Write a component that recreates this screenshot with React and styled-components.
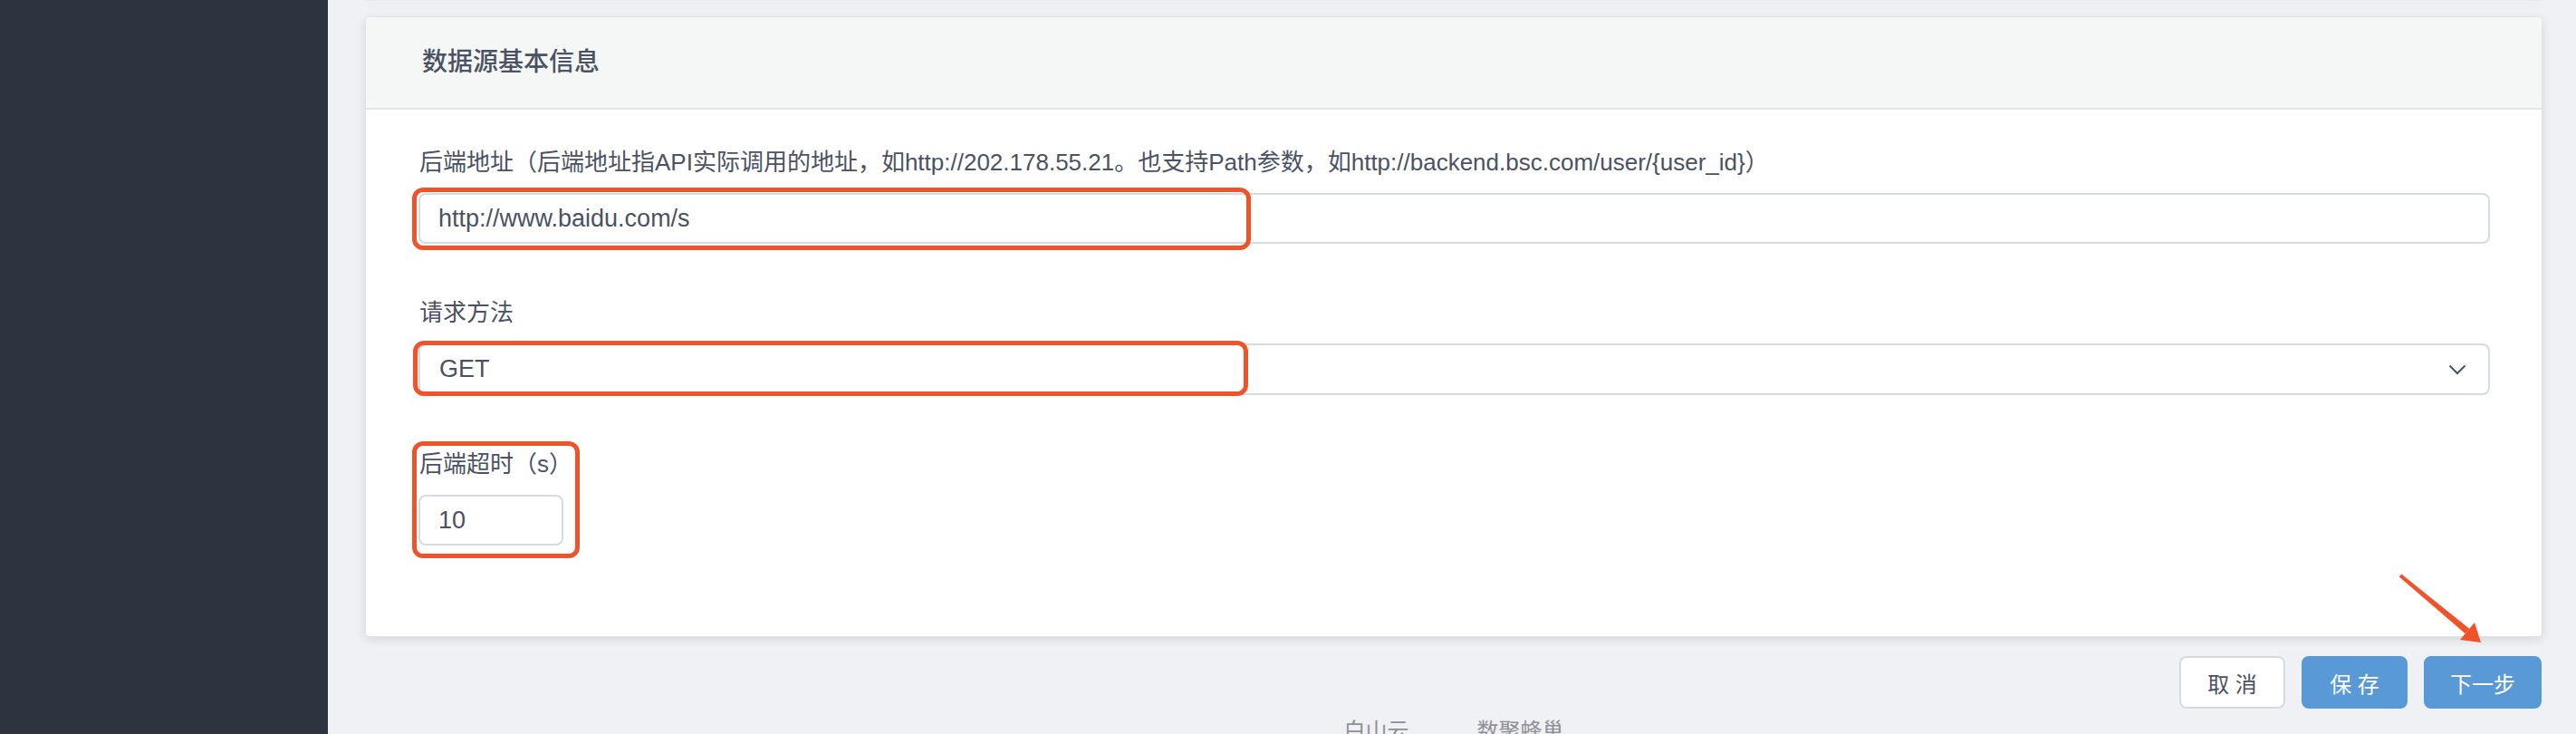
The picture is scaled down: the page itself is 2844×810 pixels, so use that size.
import React from "react";
import styled, { createGlobalStyle } from "styled-components";

const GlobalStyle = createGlobalStyle`
  html, body { margin: 0; padding: 0; }
  body {
    background: #eff1f4;
    font-family: "Liberation Sans", "Noto Sans CJK SC", sans-serif;
    color: #4a5263;
  }
  * { box-sizing: border-box; }
`;

const Layout = styled.div`
  display: flex;
  height: 810px;
  overflow: hidden;
`;

const Sidebar = styled.aside`
  width: 362px;
  flex: none;
  background: #2d3440;
`;

const Main = styled.main`
  flex: 1;
  display: flex;
  flex-direction: column;
  padding: 0 38px 0 42px;
  min-width: 0;
  & > * { flex-shrink: 0; }
`;

const PrevCardTail = styled.div`
  height: 1px;
  background: #e8eaee;
  box-shadow: 0 2px 10px rgba(40, 50, 70, 0.14);
  margin-bottom: 18px;
`;

const Card = styled.section`
  background: #fff;
  border-radius: 4px;
  box-shadow: 0 0 0 1px #e0e3e8, 0 3px 12px rgba(40, 50, 70, 0.16);
  overflow: hidden;
`;

const CardHeader = styled.header`
  height: 102px;
  display: flex;
  align-items: center;
  padding-left: 62px;
  background: #f5f7f7;
  border-bottom: 2px solid #e3e6ea;
`;

const CardTitle = styled.h2`
  margin: 0;
  font-size: 28px;
  font-weight: 500;
  color: #4a5263;
  line-height: 36px;
`;

const CardBody = styled.div`
  display: flex;
  flex-direction: column;
  gap: 58px;
  padding: 40px 57px 100px 58px;
`;

const FormGroup = styled.div`
  position: relative;
  display: flex;
  flex-direction: column;
  align-items: ${(p) => (p.$compact ? "flex-start" : "stretch")};
`;

const Label = styled.label`
  font-size: 26px;
  line-height: 36px;
  color: #4a5263;
  margin-bottom: 16px;
  padding-left: 1px;
`;

const FieldWrap = styled.div`
  position: relative;
  width: ${(p) => p.$width || "100%"};
`;

const TextInput = styled.input`
  display: block;
  width: 100%;
  height: 56px;
  padding: 0 20px;
  border: 2px solid #d6dae3;
  border-radius: 8px;
  background: #fff;
  font-family: "Liberation Sans", "Noto Sans CJK SC", sans-serif;
  font-size: 27px;
  color: #4a5263;
  outline: none;
`;

const SelectBox = styled.div`
  display: flex;
  align-items: center;
  justify-content: space-between;
  height: 57px;
  padding: 0 24px 0 21px;
  border: 2px solid #d6dae3;
  border-radius: 8px;
  background: #fff;
  font-size: 27px;
  color: #4a5263;
`;

const Highlight = styled.div`
  position: absolute;
  left: ${(p) => p.$x}px;
  top: ${(p) => p.$y}px;
  width: ${(p) => p.$w}px;
  height: ${(p) => p.$h}px;
  border: 5px solid #f0532a;
  border-radius: 12px;
  pointer-events: none;
`;

const Actions = styled.div`
  position: relative;
  display: flex;
  justify-content: flex-end;
  gap: 18px;
  margin-top: 22px;
`;

const Button = styled.button`
  height: 58px;
  width: ${(p) => (p.$wide ? 130 : 117)}px;
  padding: 0;
  border-radius: 8px;
  font-family: "Liberation Sans", "Noto Sans CJK SC", sans-serif;
  font-size: 24px;
  cursor: pointer;
  border: 2px solid ${(p) => (p.$primary ? "#5899d6" : "#d6dae3")};
  background: ${(p) => (p.$primary ? "#5899d6" : "#fff")};
  color: ${(p) => (p.$primary ? "#fff" : "#4a5263")};
`;

const ArrowMark = styled.svg`
  position: absolute;
  right: 56px;
  top: -99px;
  pointer-events: none;
`;

const Footer = styled.footer`
  display: flex;
  justify-content: center;
  gap: 75px;
  margin-top: 10px;
  font-size: 24px;
  line-height: 30px;
  color: #8d9096;
`;

function Chevron() {
  return (
    <svg width="20" height="12" viewBox="0 0 20 12">
      <polyline
        points="1.5,1.5 10,10 18.5,1.5"
        fill="none"
        stroke="#4a5263"
        strokeWidth="2"
      />
    </svg>
  );
}

export default function App() {
  return (
    <>
      <GlobalStyle />
      <Layout>
        <Sidebar />
        <Main>
          <PrevCardTail />
          <Card>
            <CardHeader>
              <CardTitle>数据源基本信息</CardTitle>
            </CardHeader>
            <CardBody>
              <FormGroup>
                <Label>
                  后端地址（后端地址指API实际调用的地址，如http://202.178.55.21。也支持Path参数，如http://backend.bsc.com/user/{"{user_id}"}）
                </Label>
                <FieldWrap>
                  <TextInput readOnly value="http://www.baidu.com/s" />
                  <Highlight $x={-7} $y={-6} $w={926} $h={69} />
                </FieldWrap>
              </FormGroup>
              <FormGroup>
                <Label>请求方法</Label>
                <FieldWrap>
                  <SelectBox>
                    <span>GET</span>
                    <Chevron />
                  </SelectBox>
                  <Highlight $x={-6} $y={-3} $w={922} $h={61} />
                </FieldWrap>
              </FormGroup>
              <FormGroup $compact>
                <Label>后端超时（s）</Label>
                <FieldWrap $width="160px">
                  <TextInput readOnly value="10" />
                </FieldWrap>
                <Highlight $x={-7} $y={-7} $w={185} $h={129} />
              </FormGroup>
            </CardBody>
          </Card>
          <Actions>
            <ArrowMark width="110" height="94" viewBox="0 0 110 94">
              <polygon
                points="8.7,11.5 11.3,8.5 86.2,68.8 81.8,74.2"
                fill="#f0532a"
              />
              <polygon points="99,84 76,81 92,62" fill="#f0532a" />
            </ArrowMark>
            <Button>取 消</Button>
            <Button $primary>保 存</Button>
            <Button $primary $wide>下一步</Button>
          </Actions>
          <Footer>
            <span>白山云</span>
            <span>数聚蜂巢</span>
          </Footer>
        </Main>
      </Layout>
    </>
  );
}
